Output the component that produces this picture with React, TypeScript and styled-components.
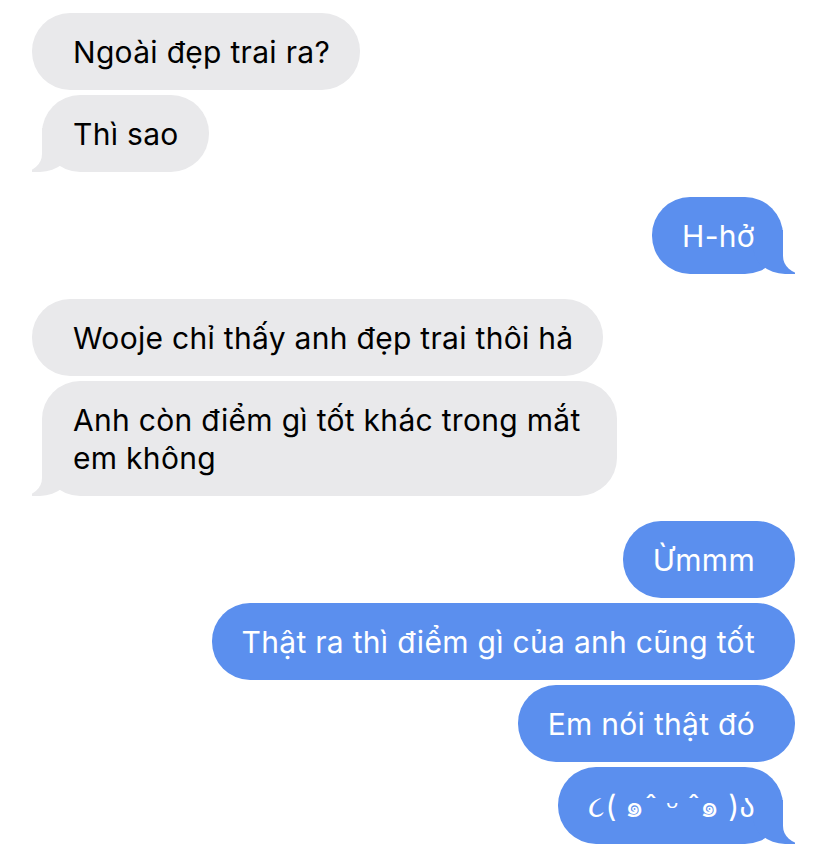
import React from "react";
import styled, { createGlobalStyle, css } from "styled-components";

const GlobalStyle = createGlobalStyle`
  html, body {
    margin: 0;
    padding: 0;
    background: #ffffff;
  }
  body {
    font-family: Inter, "Noto Sans", "DejaVu Sans", sans-serif;
    -webkit-font-smoothing: antialiased;
  }
`;

const GRAY = "#e9e9eb";
const BLUE = "#5b8fee";

const Thread = styled.div`
  display: flex;
  flex-direction: column;
  gap: 25px;
  padding: 13px 33px 14px 32px;
  width: 828px;
  box-sizing: border-box;
  overflow: hidden;
`;

const Group = styled.div<{ $from: "them" | "me" }>`
  display: flex;
  flex-direction: column;
  gap: 5px;
  align-items: ${(p) => (p.$from === "them" ? "flex-start" : "flex-end")};
`;

const Bubble = styled.div<{ $from: "them" | "me"; $tail?: boolean }>`
  position: relative;
  box-sizing: border-box;
  max-width: ${(p) => (p.$tail ? 575 : 585)}px;
  padding: 19.5px 30px;
  border-radius: 38px;
  font-size: 30px;
  line-height: 38px;
  letter-spacing: 0.3px;
  white-space: pre-wrap;

  ${(p) =>
    p.$from === "them"
      ? css`
          background: ${GRAY};
          color: #000000;
          padding-left: ${p.$tail ? 31 : 41}px;
          margin-left: ${p.$tail ? 10 : 0}px;
        `
      : css`
          background: ${BLUE};
          color: #ffffff;
          padding-right: ${p.$tail ? 28 : 40}px;
          margin-right: ${p.$tail ? 12 : 0}px;
        `}

  ${(p) =>
    p.$tail &&
    (p.$from === "them"
      ? css`
          &::before {
            content: "";
            position: absolute;
            bottom: 0;
            left: -10px;
            width: 40px;
            height: 44px;
            background: ${GRAY};
            border-bottom-right-radius: 32px 28px;
          }
          &::after {
            content: "";
            position: absolute;
            bottom: 0;
            left: -44px;
            width: 44px;
            height: 44px;
            background: #ffffff;
            border-bottom-right-radius: 20px 18px;
          }
        `
      : css`
          &::before {
            content: "";
            position: absolute;
            bottom: 0;
            right: -12px;
            width: 42px;
            height: 44px;
            background: ${BLUE};
            border-bottom-left-radius: 32px 28px;
          }
          &::after {
            content: "";
            position: absolute;
            bottom: 0;
            right: -46px;
            width: 46px;
            height: 44px;
            background: #ffffff;
            border-bottom-left-radius: 20px 18px;
          }
        `)}
`;

const Text = styled.span`
  position: relative;
  z-index: 1;
`;

type Msg = { text: string; tail?: boolean };
type Block = { from: "them" | "me"; msgs: Msg[] };

const blocks: Block[] = [
  {
    from: "them",
    msgs: [{ text: "Ngoài đẹp trai ra?" }, { text: "Thì sao", tail: true }],
  },
  { from: "me", msgs: [{ text: "H-hở", tail: true }] },
  {
    from: "them",
    msgs: [
      { text: "Wooje chỉ thấy anh đẹp trai thôi hả" },
      { text: "Anh còn điểm gì tốt khác trong mắt em không", tail: true },
    ],
  },
  {
    from: "me",
    msgs: [
      { text: "Ừmmm" },
      { text: "Thật ra thì điểm gì của anh cũng tốt" },
      { text: "Em nói thật đó" },
      { text: "૮( ๑ˆ ᵕ ˆ๑ )ა", tail: true },
    ],
  },
];

export default function App() {
  return (
    <>
      <GlobalStyle />
      <Thread>
        {blocks.map((b, i) => (
          <Group key={i} $from={b.from}>
            {b.msgs.map((m, j) => (
              <Bubble key={j} $from={b.from} $tail={m.tail}>
                <Text>{m.text}</Text>
              </Bubble>
            ))}
          </Group>
        ))}
      </Thread>
    </>
  );
}
